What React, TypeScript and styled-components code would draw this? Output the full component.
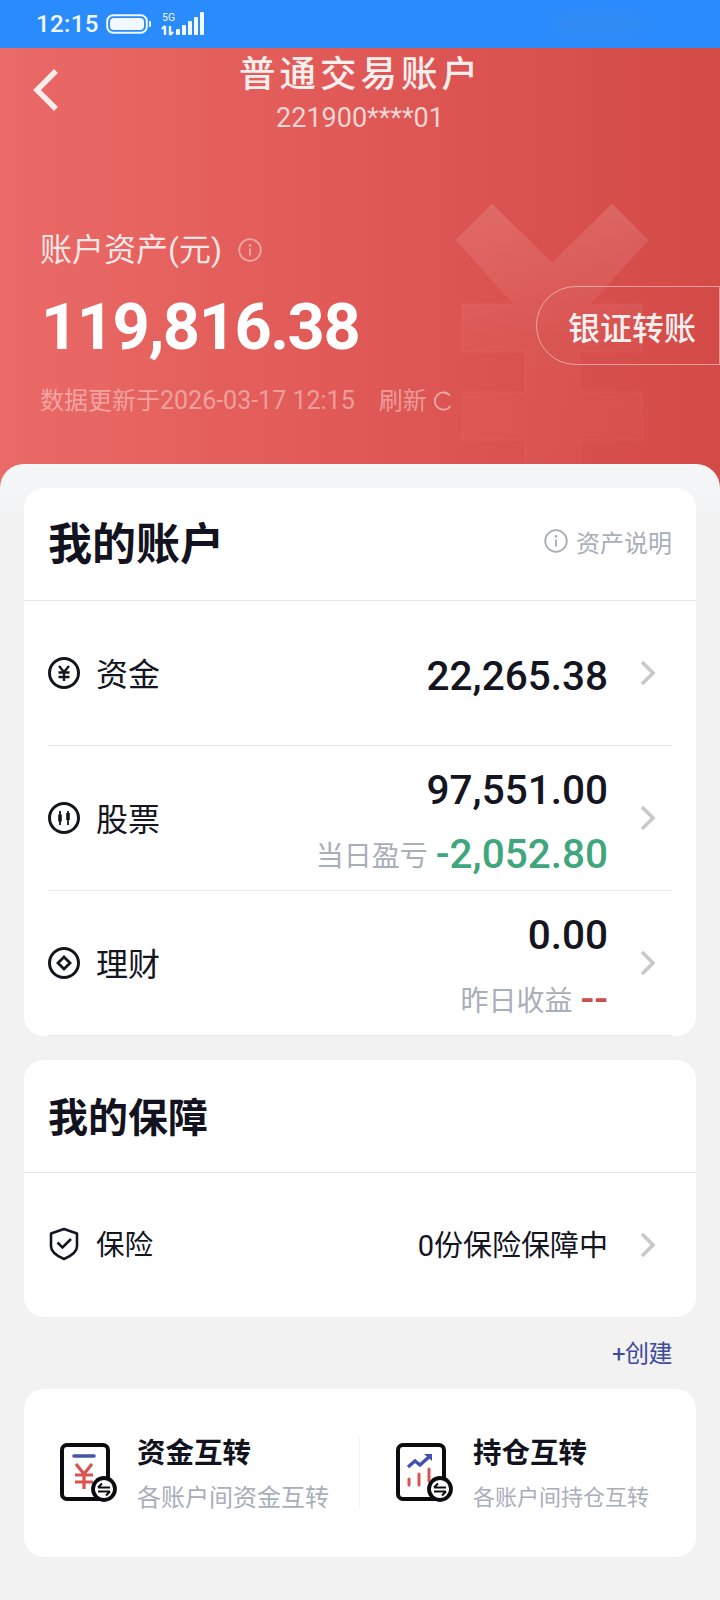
import React from 'react'
import styled, { createGlobalStyle } from 'styled-components'

const GlobalStyle = createGlobalStyle`
  html, body {
    margin: 0;
    padding: 0;
    background: #f2f2f2;
  }
  * {
    box-sizing: border-box;
  }
`

const Page = styled.div`
  width: 720px;
  height: 1600px;
  overflow: hidden;
  background: #f2f2f2;
  font-family: Roboto, "Noto Sans CJK SC", sans-serif;
  color: #14151f;
`

const StatusBar = styled.div`
  height: 48px;
  background: #2a8bfd;
  display: flex;
  align-items: center;
  padding-left: 36px;
  color: #f2f8ff;
`

const Clock = styled.div`
  font-size: 24px;
  font-weight: 500;
  letter-spacing: 0.4px;
  width: 70px;
`

const Blurred = styled.div`
  width: 90px;
  height: 20px;
  margin-left: 345px;
  border-radius: 10px;
  background: #3f8fdf;
  opacity: 0.4;
  filter: blur(8px);
`

const Hero = styled.div`
  position: relative;
  height: 442px;
  overflow: hidden;
  background: linear-gradient(90deg, #ea6a67 0%, #e15a57 45%, #d34a47 100%);
  color: #fff;
`

const Watermark = styled.svg`
  position: absolute;
  top: 156px;
  left: 456px;
`

const Nav = styled.div`
  position: relative;
  display: grid;
  grid-template-columns: 130px 1fr 130px;
  padding-top: 5px;
`

const BackButton = styled.div`
  padding: 15px 0 0 32px;
`

const TitleBlock = styled.div`
  display: flex;
  flex-direction: column;
  align-items: center;
`

const Title = styled.div`
  font-size: 36.5px;
  font-weight: 500;
  line-height: 44px;
  letter-spacing: 4px;
  padding-left: 1px;
  color: #f9eeee;
`

const Account = styled.div`
  font-size: 27px;
  line-height: 34px;
  margin-top: 4px;
  color: rgba(255, 255, 255, 0.75);
`

const Balance = styled.div`
  position: relative;
  margin-top: 93px;
  padding-left: 40px;
`

const BalanceLabel = styled.div`
  display: flex;
  align-items: center;
  gap: 16px;
  font-size: 32px;
  line-height: 44px;
  color: rgba(255, 255, 255, 0.85);
`

const AmountRow = styled.div`
  display: flex;
  justify-content: space-between;
  align-items: center;
  height: 79px;
  margin-top: 14px;
`

const Amount = styled.div`
  font-size: 65px;
  font-weight: 700;
  letter-spacing: -1.5px;
  padding-left: 1px;
  padding-top: 3px;
`

const TransferButton = styled.div`
  width: 184px;
  height: 79px;
  display: flex;
  align-items: center;
  padding-left: 31px;
  border: 1px solid rgba(255, 255, 255, 0.45);
  border-radius: 40px 0 0 40px;
  font-size: 32px;
  font-weight: 500;
  color: #f8f0f0;
`

const UpdateLine = styled.div`
  display: flex;
  align-items: center;
  margin-top: 19px;
  font-size: 24px;
  line-height: 34px;
  color: rgba(255, 255, 255, 0.42);
`

const UpdateTime = styled.span`
  font-size: 25px;
`

const RefreshLabel = styled.span`
  margin-left: 24px;
  margin-right: 6px;
`

const Sheet = styled.div`
  position: relative;
  margin-top: -26px;
  padding: 24px 24px 0;
  border-radius: 24px 24px 0 0;
  background: linear-gradient(180deg, #f8f6f7 0, #f3f5f6 4px, #f3f5f6 24px, #f2f2f2 60px);
`

const Card = styled.div`
  background: #fff;
  border-radius: 20px;
  margin-bottom: 24px;
  overflow: hidden;
`

const CardHeader = styled.div<{ $shift: number }>`
  height: 113px;
  display: flex;
  align-items: center;
  justify-content: space-between;
  padding: 0 24px ${p => p.$shift}px;
  border-bottom: 1px solid #e4e5e8;
`

const CardTitle = styled.div<{ $size: number }>`
  font-size: ${p => p.$size}px;
  font-weight: 700;
  color: #12131e;
`

const Explain = styled.div`
  display: flex;
  align-items: center;
  gap: 8px;
  font-size: 24px;
  color: #a8aeba;
`

const Row = styled.div<{ $divider?: boolean }>`
  height: ${p => (p.$divider ? 145 : 144)}px;
  margin: 0 24px;
  padding-bottom: 2px;
  display: flex;
  align-items: center;
  ${p => p.$divider && 'border-bottom: 1px solid #e4e5e8;'}
`

const RowLabel = styled.div<{ $size: number }>`
  display: flex;
  align-items: center;
  gap: 16px;
  font-size: ${p => p.$size}px;
  color: #14151f;
`

const LabelText = styled.span<{ $lift?: number }>`
  margin-bottom: ${p => p.$lift ?? 0}px;
`

const RoundIcon = styled.svg`
  margin-top: 2px;
`

const Values = styled.div<{ $shift: number }>`
  margin-left: auto;
  padding-top: ${p => p.$shift}px;
  display: flex;
  flex-direction: column;
  align-items: flex-end;
`

const Value = styled.div`
  font-size: 40.5px;
  font-weight: 500;
  line-height: 63px;
  color: #14151f;
`

const PlainValue = styled.div`
  font-size: 29px;
  margin-bottom: 2px;
  color: #14151f;
`

const SubLine = styled.div`
  display: flex;
  align-items: center;
  gap: 8px;
  height: 63px;
  font-size: 28px;
  color: #a8aeba;
`

const Change = styled.span<{ $color: string }>`
  font-size: 40.5px;
  font-weight: 500;
  color: ${p => p.$color};
`

const Chevron = styled.svg`
  margin-left: 31px;
  margin-right: 15px;
  margin-top: 2px;
  flex: none;
`

const CreateLink = styled.div`
  text-align: right;
  font-size: 24px;
  line-height: 26px;
  letter-spacing: -0.5px;
  margin: 0 0 22px;
  padding-right: 24px;
  color: #3d4aa0;
`

const TransferCard = styled.div`
  background: #fff;
  border-radius: 20px;
  height: 168px;
  display: grid;
  grid-template-columns: 336px 336px;
  align-items: center;
`

const TransferItem = styled.div<{ $divider?: boolean }>`
  height: 72px;
  display: flex;
  align-items: center;
  gap: 19px;
  padding-left: 36px;
  ${p => p.$divider && 'border-right: 1px solid #f3f3f3;'}
`

const TransferText = styled.div`
  display: flex;
  flex-direction: column;
  padding-top: 4px;
`

const TransferTitle = styled.div`
  font-size: 28.5px;
  line-height: 36px;
  font-weight: 700;
  color: #12131e;
`

const TransferSub = styled.div<{ $size: number }>`
  font-size: ${p => p.$size}px;
  line-height: 34px;
  margin-top: 9px;
  color: #a8aeba;
`

const Arrow = () => (
  <Chevron width="18" height="28" viewBox="0 0 18 28" fill="none">
    <path d="M3 3l11 11L3 25" stroke="#c9c9c9" strokeWidth="3.6" />
  </Chevron>
)

const Info = ({ color, size }: { color: string; size: number }) => (
  <svg width={size} height={size} viewBox="0 0 24 24" fill="none">
    <circle cx="12" cy="12" r="10.8" stroke={color} strokeWidth="1.8" />
    <circle cx="12" cy="7.4" r="1.3" fill={color} />
    <path d="M12 10.5v7" stroke={color} strokeWidth="1.9" />
  </svg>
)

const CircleIcon = ({ children }: { children: React.ReactNode }) => (
  <RoundIcon width="32" height="32" viewBox="0 0 32 32" fill="none">
    <circle cx="16" cy="16" r="14.5" stroke="#14151f" strokeWidth="3" />
    {children}
  </RoundIcon>
)

const ExchangeBadge = ({ cx, cy }: { cx: number; cy: number }) => (
  <g>
    <circle cx={cx} cy={cy} r="11" fill="#fff" stroke="#0c0c10" strokeWidth="3.8" />
    <path
      d={`M${cx - 6} ${cy - 1.5}h12M${cx - 6} ${cy - 1.5}l4-4M${cx + 6} ${cy + 2.5}h-12M${cx + 6} ${cy + 2.5}l-4 4`}
      stroke="#0c0c10"
      strokeWidth="2"
    />
  </g>
)

export default function App() {
  return (
    <Page>
      <GlobalStyle />
      <StatusBar>
        <Clock>12:15</Clock>
        <svg width="46" height="20" viewBox="0 0 46 20" fill="none">
          <rect x="1.2" y="1.2" width="39.6" height="17.6" rx="6" stroke="#f2f8ff" strokeWidth="2" />
          <rect x="4" y="4" width="34" height="12" rx="4" fill="#f2f8ff" />
          <rect x="43" y="7" width="2" height="6" rx="1" fill="#f2f8ff" />
        </svg>
        <svg width="46" height="26" viewBox="0 0 46 26" fill="none" style={{ marginLeft: 9 }}>
          <text x="1" y="10" fontSize="10.5" fontFamily="Roboto" fill="#f2f8ff">5G</text>
          <path d="M4 15v9M1 18l3-3M9 15v9M12 21l-3 3" stroke="#f2f8ff" strokeWidth="2.4" />
          <rect x="15" y="18" width="4" height="6" rx="1" fill="#f2f8ff" />
          <rect x="21" y="14" width="4" height="10" rx="1" fill="#f2f8ff" />
          <rect x="27" y="10" width="4" height="14" rx="1" fill="#f2f8ff" />
          <rect x="33" y="6" width="4" height="18" rx="1" fill="#f2f8ff" />
          <rect x="39" y="1" width="4" height="23" rx="1" fill="#f2f8ff" />
        </svg>
        <Blurred />
      </StatusBar>

      <Hero>
        <Watermark width="192" height="290" viewBox="0 0 192 290" fill="none">
          <defs>
            <linearGradient id="yen" x1="0" y1="0" x2="0" y2="1">
              <stop offset="0" stopColor="#fff" stopOpacity="0.13" />
              <stop offset="0.45" stopColor="#fff" stopOpacity="0.03" />
              <stop offset="1" stopColor="#fff" stopOpacity="0.01" />
            </linearGradient>
          </defs>
          <path
            d="M36 0L0 36L58 100H6V148H69V188H6V236H69V290H124V236H186V188H124V148H186V100H134L192 36L156 0L96 59Z"
            fill="url(#yen)"
            stroke="rgba(255,255,255,0.06)"
          />
        </Watermark>
        <Nav>
          <BackButton>
            <svg width="28" height="44" viewBox="0 0 28 44" fill="none">
              <path d="M24 3L5 22l19 19" stroke="#f9eeee" strokeWidth="5.5" />
            </svg>
          </BackButton>
          <TitleBlock>
            <Title>普通交易账户</Title>
            <Account>221900****01</Account>
          </TitleBlock>
        </Nav>
        <Balance>
          <BalanceLabel>
            账户资产(元)
            <Info color="rgba(255,255,255,0.45)" size={24} />
          </BalanceLabel>
          <AmountRow>
            <Amount>119,816.38</Amount>
            <TransferButton>银证转账</TransferButton>
          </AmountRow>
          <UpdateLine>
            数据更新于<UpdateTime>2026-03-17 12:15</UpdateTime>
            <RefreshLabel>刷新</RefreshLabel>
            <svg width="20" height="20" viewBox="0 0 20 20" fill="none">
              <path d="M17 4.5A8.6 8.6 0 1 0 17.5 15" stroke="rgba(255,255,255,0.5)" strokeWidth="1.8" />
            </svg>
          </UpdateLine>
        </Balance>
      </Hero>

      <Sheet>
        <Card>
          <CardHeader $shift={6}>
            <CardTitle $size={44}>我的账户</CardTitle>
            <Explain>
              <Info color="#a8aeba" size={24} />
              资产说明
            </Explain>
          </CardHeader>
          <Row $divider>
            <RowLabel $size={32}>
              <CircleIcon>
                <path d="M11 9l5 6 5-6M16 15v9M10.5 15.5h11M10.5 20h11" stroke="#14151f" strokeWidth="2.4" />
              </CircleIcon>
              <LabelText>资金</LabelText>
            </RowLabel>
            <Values $shift={8}>
              <Value>22,265.38</Value>
            </Values>
            <Arrow />
          </Row>
          <Row $divider>
            <RowLabel $size={32}>
              <CircleIcon>
                <path d="M12 9v14M20 9v14" stroke="#14151f" strokeWidth="1.8" />
                <path d="M12 12.5v7M20 11v7" stroke="#14151f" strokeWidth="3.6" />
              </CircleIcon>
              <LabelText>股票</LabelText>
            </RowLabel>
            <Values $shift={10}>
              <Value>97,551.00</Value>
              <SubLine>
                当日盈亏
                <Change $color="#3fa67d">-2,052.80</Change>
              </SubLine>
            </Values>
            <Arrow />
          </Row>
          <Row $divider>
            <RowLabel $size={32}>
              <CircleIcon>
                <path d="M16 10l6 6-6 6-6-6z" stroke="#14151f" strokeWidth="2.8" />
              </CircleIcon>
              <LabelText>理财</LabelText>
            </RowLabel>
            <Values $shift={10}>
              <Value>0.00</Value>
              <SubLine>
                昨日收益
                <Change $color="#c9504f">--</Change>
              </SubLine>
            </Values>
            <Arrow />
          </Row>
        </Card>

        <Card>
          <CardHeader $shift={2}>
            <CardTitle $size={40}>我的保障</CardTitle>
          </CardHeader>
          <Row>
            <RowLabel $size={28.5}>
              <svg width="32" height="34" viewBox="0 0 32 34" fill="none">
                <path
                  d="M16 2l13 4.5v13c0 5.5-6 9.5-13 12.5C9 29 3 25 3 19.5v-13z"
                  stroke="#14151f"
                  strokeWidth="2.6"
                  strokeLinejoin="round"
                />
                <path d="M9.5 15.5l5 5 8.5-8.5" stroke="#14151f" strokeWidth="2.6" />
              </svg>
              <LabelText $lift={3}>保险</LabelText>
            </RowLabel>
            <Values $shift={0}>
              <PlainValue>0份保险保障中</PlainValue>
            </Values>
            <Arrow />
          </Row>
        </Card>

        <CreateLink>+创建</CreateLink>

        <TransferCard>
          <TransferItem $divider>
            <svg width="58" height="60" viewBox="0 0 58 60" fill="none">
              <rect x="2" y="2" width="46" height="54" rx="5" fill="#fff" stroke="#0c0c10" strokeWidth="4" />
              <path d="M14 13h20" stroke="#4756a8" strokeWidth="3.6" strokeLinecap="round" />
              <path
                d="M16 21l8 10 8-10M24 31v15M15 32h18M15 39h18"
                stroke="#d9534f"
                strokeWidth="3.2"
              />
              <ExchangeBadge cx={44} cy={46} />
            </svg>
            <TransferText>
              <TransferTitle>资金互转</TransferTitle>
              <TransferSub $size={24}>各账户间资金互转</TransferSub>
            </TransferText>
          </TransferItem>
          <TransferItem>
            <svg width="58" height="60" viewBox="0 0 58 60" fill="none">
              <rect x="2" y="2" width="46" height="54" rx="5" fill="#fff" stroke="#0c0c10" strokeWidth="4" />
              <path d="M12 24l7-6 5 4 10-9" stroke="#4350b0" strokeWidth="3.4" />
              <path d="M28 11h8v7z" fill="#4350b0" />
              <path d="M13 36v6M23 31v11M33 26v12" stroke="#d9534f" strokeWidth="3" strokeLinecap="round" />
              <ExchangeBadge cx={44} cy={46} />
            </svg>
            <TransferText>
              <TransferTitle>持仓互转</TransferTitle>
              <TransferSub $size={22}>各账户间持仓互转</TransferSub>
            </TransferText>
          </TransferItem>
        </TransferCard>
      </Sheet>
    </Page>
  )
}
